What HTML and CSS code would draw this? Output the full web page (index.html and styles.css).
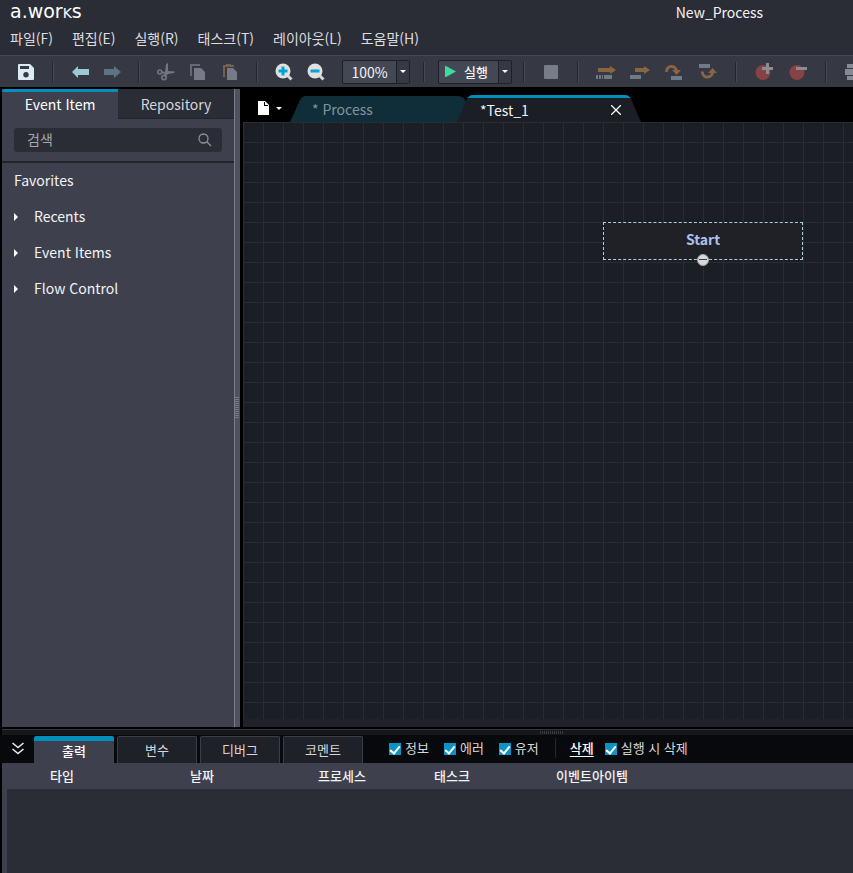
FILE: index.html
```html
<!DOCTYPE html>
<html lang="ko">
<head>
<meta charset="utf-8">
<meta name="viewport" content="width=device-width, initial-scale=1">
<title>New_Process</title>
<link rel="stylesheet" href="styles.css">
</head>
<body>
<div class="app">
  <header class="titlebar">
    <div class="title-row">
      <div class="logo">a.wor<span class="logo-k">k</span>s</div>
      <h1 class="doc-title">New_Process</h1>
    </div>
    <nav class="menu">
      <button>파일(F)</button>
      <button>편집(E)</button>
      <button>실행(R)</button>
      <button>태스크(T)</button>
      <button>레이아웃(L)</button>
      <button>도움말(H)</button>
    </nav>
  </header>

  <div class="toolbar">
    <button class="tool" aria-label="Save"><svg width="16" height="16" viewBox="0 0 16 16"><path fill="#dcebf3" fill-rule="evenodd" d="M1 0H12L16 4V15Q16 16 15 16H1Q0 16 0 15V1Q0 0 1 0ZM2 2V5H11V2ZM8 8A2.700 2.700 0 1 0 8 13.400A2.700 2.700 0 1 0 8 8Z"/></svg></button>
    <i class="sep"></i>
    <button class="tool" aria-label="Undo"><svg width="18" height="14" viewBox="0 0 18 14"><path fill="#9bc9d5" d="M1 7L7 1V4H18V10H7V13Z"/></svg></button>
    <button class="tool" aria-label="Redo"><svg width="18" height="14" viewBox="0 0 18 14"><path fill="#5d7580" d="M18 7L11 1V4H1V10H11V13Z"/></svg></button>
    <i class="sep"></i>
    <button class="tool" aria-label="Cut"><svg width="18" height="18" viewBox="0 0 18 18"><g fill="none" stroke="#737680" stroke-width="1.600"><circle cx="2.800" cy="9" r="2"/><circle cx="7" cy="14.500" r="2.200"/></g><path fill="#737680" d="M4 8L8 9L9 1L11 0L11 8L18 8.500L17 10L11 11L8 14L6.500 13L8 11L4 10Z"/></svg></button>
    <button class="tool" aria-label="Copy"><svg width="16" height="16" viewBox="0 0 16 16"><path fill="#646975" d="M0 0H10V2H2V12H0Z"/><path fill="#757a86" d="M4 4H11L15 8V16H4Z"/></svg></button>
    <button class="tool" aria-label="Paste"><svg width="16" height="16" viewBox="0 0 16 16"><path fill="#765f50" d="M1 1H4V0H9V1H12V3H3V13H1Z"/><path fill="#757a86" d="M5 4H11L15 8V16H5Z"/></svg></button>
    <i class="sep"></i>
    <button class="tool" aria-label="Zoom in"><svg width="18" height="18" viewBox="0 0 18 18"><path stroke="#d5d5d7" stroke-width="3" d="M12 12L16.500 16.500"/><circle cx="8" cy="8" r="7.500" fill="#e1e1e2"/><path fill="#00a5cf" d="M6.500 3.500H9.500V6.500H12.500V9.500H9.500V12.500H6.500V9.500H3.500V6.500H6.500Z"/></svg></button>
    <button class="tool" aria-label="Zoom out"><svg width="18" height="18" viewBox="0 0 18 18"><path stroke="#d5d5d7" stroke-width="3" d="M12 12L16.500 16.500"/><circle cx="8" cy="8" r="7.500" fill="#e1e1e2"/><path fill="#00a5cf" d="M3.500 6.500H12.500V9.500H3.500Z"/></svg></button>
    <div class="combo combo-zoom"><button class="combo-main">100%</button><button class="combo-arrow" aria-label="Zoom levels"><i class="caret"></i></button></div>
    <i class="sep"></i>
    <div class="combo combo-run"><button class="combo-main"><svg width="11" height="11" viewBox="0 0 11 11"><path fill="#3ddc9c" d="M0 0H1L11 5.500L1 11H0Z"/></svg>실행</button><button class="combo-arrow" aria-label="Run options"><i class="caret"></i></button></div>
    <i class="sep"></i>
    <button class="tool" aria-label="Stop"><svg width="14" height="14" viewBox="0 0 14 14"><rect width="14" height="14" rx="1" fill="#757d88"/></svg></button>
    <i class="sep"></i>
    <button class="tool wide" aria-label="Run to"><svg width="20" height="16" viewBox="0 0 20 16"><path fill="#896642" d="M2 4H14V2L20 6L14 10V8H2Z"/><path fill="#707986" d="M0 11H2V15H0ZM3 11H5V15H3ZM6 11H7V15H6ZM8 11H16V15H8Z"/></svg></button>
    <button class="tool wide" aria-label="Step"><svg width="20" height="16" viewBox="0 0 20 16"><path fill="#896642" d="M5 4H14V2L20 6L14 10V8H5Z"/><path fill="#707986" d="M0 11H11V15H0Z"/></svg></button>
    <button class="tool wide" aria-label="Step over"><svg width="20" height="16" viewBox="0 0 20 16"><path fill="none" stroke="#896642" stroke-width="3" d="M2.500 8A5 5 0 0 1 12.500 7"/><path fill="#896642" d="M8 6H17L12.500 11Z"/><path fill="#707986" d="M7 12H18V16H7Z"/></svg></button>
    <button class="tool wide" aria-label="Step out"><svg width="20" height="16" viewBox="0 0 20 16"><path fill="#707986" d="M1 0H12V4H1Z"/><path fill="none" stroke="#896642" stroke-width="3" d="M4.500 7.500A5 5 0 0 0 14.500 8.500"/><path fill="#896642" d="M10 9H19L14.500 4Z"/></svg></button>
    <i class="sep"></i>
    <button class="tool wide" aria-label="Add breakpoint"><svg width="18" height="18" viewBox="0 0 18 18"><circle cx="8" cy="9.500" r="7.500" fill="#874344"/><path fill="#8c8c95" d="M11 0H14V4H18V7H14V11H11V7H7V4H11Z"/></svg></button>
    <button class="tool wide" aria-label="Remove breakpoint"><svg width="18" height="18" viewBox="0 0 18 18"><circle cx="8" cy="9.500" r="7.500" fill="#874344"/><path fill="#8c8c95" d="M7 4H18V7H7Z"/></svg></button>
    <i class="sep"></i>
    <button class="tool wide" aria-label="Align"><svg width="18" height="16" viewBox="0 0 18 16"><path fill="#858a94" d="M2 0H16V4H10V5H18V11H10V12H16V16H2V12H8V11H0V5H8V4H2Z"/></svg></button>
  </div>

  <main class="workspace">
    <aside class="sidebar">
      <div class="side-tabs">
        <button class="side-tab active">Event Item</button>
        <button class="side-tab">Repository</button>
      </div>
      <div class="search-area">
        <div class="search">
          <input type="text" placeholder="검색" aria-label="검색">
          <svg width="14" height="14" viewBox="0 0 14 14" fill="none" stroke="#8e9099" stroke-width="1.300"><circle cx="5.500" cy="5.500" r="4.500"/><path d="M8.800 8.800L13 13"/></svg>
        </div>
      </div>
      <ul class="tree">
        <li>Favorites</li>
        <li><i class="expander"></i>Recents</li>
        <li><i class="expander"></i>Event Items</li>
        <li><i class="expander"></i>Flow Control</li>
      </ul>
    </aside>
    <div class="splitter"><i class="grip"></i></div>
    <section class="editor">
      <div class="doc-tabs">
        <button class="new-doc" aria-label="New document"><svg width="11" height="14" viewBox="0 0 11 14"><path fill="#fff" fill-rule="evenodd" d="M0 0H7L11 4V14H0ZM6 1V5H10V4H7V1Z"/></svg><i class="caret"></i></button>
        <div class="doc-tab inactive"><span>* Process</span></div>
        <div class="doc-tab current"><span>*Test_1</span><button class="close" aria-label="Close"><svg width="10" height="10" viewBox="0 0 10 10" stroke="#fff" stroke-width="1.300"><path d="M0 0L10 10M10 0L0 10"/></svg></button></div>
      </div>
      <div class="canvas">
        <div class="node">Start<svg class="port" width="12" height="12" viewBox="0 0 12 12"><circle cx="6" cy="6" r="5.500" fill="#d9d9d9" stroke="#a5a5a5"/><path stroke="#3c3c3e" d="M2 5.500H10"/></svg></div>
      </div>
    </section>
  </main>

  <section class="output">
    <div class="hsplit"><i class="hgrip"></i></div>
    <div class="output-bar">
      <button class="collapse" aria-label="Collapse"><svg width="12" height="13" viewBox="0 0 12 13" fill="none" stroke="#e8e8ea" stroke-width="1.600"><path d="M.5 1L6 5.500L11.500 1M.5 7L6 11.500L11.500 7"/></svg></button>
      <div class="out-tabs">
        <button class="out-tab active">출력</button>
        <button class="out-tab">변수</button>
        <button class="out-tab">디버그</button>
        <button class="out-tab">코멘트</button>
      </div>
      <div class="filters">
        <label><input type="checkbox" checked>정보</label>
        <label><input type="checkbox" checked>에러</label>
        <label><input type="checkbox" checked>유저</label>
      </div>
      <i class="bar-sep"></i>
      <button class="clear">삭제</button>
      <label><input type="checkbox" checked>실행 시 삭제</label>
    </div>
    <div class="log">
      <table>
        <colgroup><col class="c-type"><col class="c-date"><col class="c-proc"><col class="c-task"><col class="c-item"><col></colgroup>
        <thead><tr><th>타입</th><th>날짜</th><th>프로세스</th><th>태스크</th><th>이벤트아이템</th><th></th></tr></thead>
      </table>
      <div class="log-body"></div>
    </div>
  </section>
</div>
</body>
</html>
```
FILE: styles.css
```css
* { box-sizing: border-box; }

body {
  margin: 0;
  background: #000;
  color: #f2f3f5;
  font: 14px/20px "Noto Sans CJK KR", "Noto Sans", sans-serif;
}

button {
  margin: 0;
  padding: 0;
  border: 0;
  background: none;
  color: inherit;
  font: inherit;
  white-space: nowrap;
}

svg { display: block; flex: none; }

.app {
  display: flex;
  flex-direction: column;
  height: 100vh;
  overflow: hidden;
}

/* Title and menu */
.titlebar { background: #2b2d36; height: 55px; flex: none; }
.title-row {
  display: flex;
  align-items: center;
  justify-content: space-between;
  height: 24px;
  padding: 0 90px 0 10px;
}
.logo { font: 19px/20px "DejaVu Sans", sans-serif; color: #fff; }
.logo-k { text-transform: uppercase; font-size: 14px; }
.doc-title { margin: 0; font-size: 14px; font-weight: 400; }
.menu { display: flex; gap: 19px; padding: 4px 10px; color: #dcdde1; }

/* Toolbar */
.toolbar {
  display: flex;
  flex: none;
  align-items: center;
  height: 32px;
  padding-left: 10px;
  border-top: 1px solid #464953;
  background: #363943;
}
.tool {
  display: flex;
  flex: none;
  align-items: center;
  justify-content: center;
  width: 32px;
  height: 24px;
}
.tool.wide { width: 34px; }
.sep {
  flex: none;
  width: 2px;
  height: 20px;
  margin: 0 10px;
  border-left: 1px solid #23252c;
  border-right: 1px solid #474a55;
}
.combo {
  display: flex;
  flex: none;
  height: 24px;
  margin: 0 3px;
  border: 1px solid #1e2027;
  border-radius: 2px;
  background: #444855;
}
.combo-zoom { width: 68px; margin-left: 10px; }
.combo-run { width: 74px; margin-right: 1px; font-size: 13px; font-weight: 500; }
.combo-main {
  display: flex;
  flex: 1;
  align-items: center;
  justify-content: center;
  gap: 8px;
}
.combo-run .combo-main { padding-right: 4px; }
.combo-arrow {
  display: flex;
  align-items: center;
  justify-content: center;
  width: 13px;
  border-left: 1px solid #1e2027;
  background: #363943;
}
.caret {
  border: 3px solid transparent;
  border-top-color: #fff;
  border-bottom: 0;
}

/* Workspace */
.workspace { display: flex; flex: 1; min-height: 0; padding-left: 2px; }
.sidebar { width: 232px; flex: none; margin-top: 2px; background: #3e414d; }
.side-tabs { display: flex; height: 30px; }
.side-tab {
  flex: 1;
  padding-top: 1px;
  border-bottom: 1px solid #22242b;
  background: #2b2d36;
  color: #d5d6da;
}
.side-tab.active {
  padding: 0 0 3px;
  border-top: 3px solid #008fbc;
  border-bottom: 0;
  border-radius: 2px 0 0 0;
  background: #3e414d;
  color: #fff;
}
.search-area { padding: 9px 12px; border-bottom: 2px solid #23252c; }
.search {
  display: flex;
  align-items: center;
  height: 24px;
  padding: 0 10px 0 13px;
  border-radius: 3px;
  background: #2b2d36;
}
.search input {
  flex: 1;
  min-width: 0;
  padding: 0 0 2px;
  border: 0;
  outline: 0;
  background: none;
  color: #fff;
  font: inherit;
}
.search input::placeholder { color: #a5a6ab; opacity: 1; }
.tree { margin: 0; padding: 0 12px; list-style: none; }
.tree li { display: flex; align-items: center; height: 36px; padding-bottom: 3px; }
.expander {
  width: 4px;
  margin: 3px 16px 0 0;
  border: 4px solid transparent;
  border-left-color: #fff;
  border-right: 0;
}
.splitter {
  display: flex;
  flex: none;
  align-items: center;
  width: 6px;
  margin: 2px 3px 0 0;
  border-left: 1px solid #7b7e89;
  background: #4e515e;
}
.grip {
  width: 4px;
  height: 22px;
  background: repeating-linear-gradient(#777b86 0 1px, #4e515e 1px 2px);
}

/* Editor */
.editor { display: flex; flex: 1; flex-direction: column; min-width: 0; }
.doc-tabs { display: flex; align-items: flex-end; height: 35px; flex: none; }
.new-doc { display: flex; align-items: center; gap: 7px; width: 47px; height: 28px; padding-left: 15px; }
.doc-tab { display: flex; flex: none; align-items: center; height: 26px; }
.doc-tab.inactive {
  width: 176px;
  padding-left: 22px;
  background: #102e39;
  color: #84949b;
  clip-path: path("M0 26L10 4Q12 0 16 0H168Q174 0 176 6V26Z");
}
.doc-tab.current {
  z-index: 1;
  justify-content: space-between;
  width: 184px;
  height: 27px;
  margin-left: -9px;
  padding: 0 20px 0 23px;
  border-top: 3px solid #008fbc;
  background: #1c1e26;
  clip-path: path("M0 27L10 4Q12 0 16 0H168Q172 0 174 4L184 27Z");
}
.canvas {
  position: relative;
  flex: 1;
  border-bottom: 8px solid #20222a;
  background:
    linear-gradient(#292c34 1px, transparent 1px) 0 0 / 20px 20px,
    linear-gradient(90deg, #292c34 1px, transparent 1px) 0 0 / 20px 20px,
    #1c1e26;
}
.node {
  position: absolute;
  left: 360px;
  top: 100px;
  width: 200px;
  height: 38px;
  border: 1px dashed #b2ced6;
  background: #202126;
  color: #aebfea;
  font-weight: 700;
  line-height: 33px;
  text-align: center;
}
.port { position: absolute; left: 93px; bottom: -7px; }

/* Output panel */
.output { flex: none; margin-top: 2px; }
.hsplit {
  display: flex;
  align-items: center;
  justify-content: center;
  height: 6px;
  margin-left: 2px;
  padding-left: 249px;
  border-top: 1px solid #34373b;
  background: #15171a;
}
.hgrip {
  width: 24px;
  height: 3px;
  background: repeating-linear-gradient(90deg, #383c42 0 1px, #15171a 1px 2px);
}
.output-bar {
  display: flex;
  align-items: center;
  height: 28px;
  padding-bottom: 2px;
  background: #08090c;
  color: #d7d8db;
  font-size: 13px;
}
.collapse { display: flex; justify-content: center; width: 32px; padding-left: 4px; }
.out-tabs { display: flex; align-self: flex-end; gap: 3px; margin: 0 0 -2px 2px; }
.out-tab {
  width: 80px;
  height: 27px;
  border: 1px solid #3b3e46;
  border-bottom: 0;
  border-radius: 2px 2px 0 0;
  background: #1f2128;
}
.out-tab.active {
  padding: 0 0 3px;
  border: 0;
  border-top: 5px solid #008fbc;
  background: #3e414d;
  color: #fff;
  font-weight: 500;
}
.filters { display: flex; gap: 15px; margin-left: 26px; }
.output-bar label { display: flex; align-items: center; gap: 4px; }
.output-bar input {
  display: flex;
  justify-content: center;
  width: 12px;
  height: 12px;
  margin: 2px 0 0;
  appearance: none;
  background: #0b93c3;
}
.output-bar input:checked::after {
  content: "";
  width: 4px;
  height: 8px;
  margin-top: 1px;
  border: solid #fff;
  border-width: 0 2px 2px 0;
  transform: rotate(40deg);
}
.bar-sep { width: 1px; height: 20px; margin: 0 14px 0 16px; background: #26282c; }
.clear { margin-right: 11px; color: #fff; font-weight: 500; text-decoration: underline; text-underline-offset: 3px; }
.log { margin-left: 2px; background: #3e414d; }
.log table { width: 100%; border-collapse: collapse; table-layout: fixed; font-size: 13px; }
.log th { height: 26px; padding: 0; font-weight: 500; text-align: center; }
.c-type { width: 120px; }
.c-date { width: 160px; }
.c-proc { width: 120px; }
.c-task { width: 100px; }
.c-item { width: 180px; }
.log-body { height: 84px; margin-left: 5px; background: #2b2d36; }
```
